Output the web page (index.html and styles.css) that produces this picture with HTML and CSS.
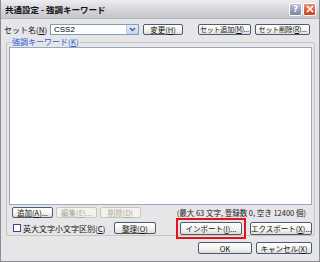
FILE: index.html
```html
<!DOCTYPE html>
<html lang="ja">
<head>
  <meta charset="UTF-8">
  <title>共通設定 - 強調キーワード</title>
  <link rel="stylesheet" href="styles.css">
</head>
<body>
<div class="window">
  <div class="titlebar">
    <span class="title">共通設定 - 強調キーワード</span>
    <span class="tbtn help">?</span>
    <span class="tbtn close">
      <svg width="8" height="8" viewBox="0 0 8 8"><path d="M1 1L7 7M7 1L1 7" stroke="#fff" stroke-width="1.6"/></svg>
    </span>
  </div>

  <div class="body">
    <div class="row top">
      <span class="label">セット名(<u>N</u>)</span>
      <div class="combo">
        <span class="combo-text">CSS2</span>
        <span class="combo-arrow">
          <svg width="7" height="5" viewBox="0 0 7 5"><path d="M1 1L3.5 3.5L6 1" stroke="#4d6185" stroke-width="1.4" fill="none"/></svg>
        </span>
      </div>
      <button class="btn w-change">変更(<u>H</u>)</button>
      <button class="btn w-add tight">セット追加(<u>M</u>)...</button>
      <button class="btn w-del tight">セット削除(<u>R</u>)...</button>
    </div>

    <div class="group">
      <span class="legend">強調キーワード(<u>K</u>)</span>
      <div class="listbox"></div>

      <div class="row edit">
        <button class="btn w-small">追加(<u>A</u>)...</button>
        <button class="btn w-small" disabled>編集(<u>E</u>)...</button>
        <button class="btn w-small" disabled>削除(<u>D</u>)</button>
        <span class="status">(最大 63 文字, 登録数 0, 空き 12400 個)</span>
      </div>

      <div class="row opts">
        <label class="check"><span class="box"></span>英大文字小文字区別(<u>C</u>)</label>
        <button class="btn w-sort">整理(<u>O</u>)</button>
        <span class="highlight">
          <button class="btn w-io">インポート(<u>I</u>)...</button>
        </span>
        <button class="btn w-io">エクスポート(<u>X</u>)...</button>
      </div>
    </div>

    <div class="row bottom">
      <button class="btn w-ok">OK</button>
      <button class="btn w-cancel">キャンセル(<u>X</u>)</button>
    </div>
  </div>
</div>
</body>
</html>
```

FILE: styles.css
```css
body {
  margin: 0;
  font-family: "Noto Sans CJK JP", "DejaVu Sans", sans-serif;
  font-size: 8px;
  background: #9a9aa4;
}

u {
  text-decoration: underline;
}

.window {
  width: 320px;
  height: 262px;
  box-sizing: border-box;
  border: 1px solid #8c8c98;
  border-top: none;
  background: #e6e5e8;
  display: flex;
  flex-direction: column;
}

.titlebar {
  height: 18px;
  display: flex;
  align-items: center;
  padding: 0 3px 0 4px;
  background: linear-gradient(#eeeef0, #d2d2d8 60%, #c6c6ce);
  border-bottom: 1px solid #b6b6be;
}

.title {
  flex: 1;
  font-weight: bold;
  color: #111;
  font-size: 8.5px;
}

.tbtn {
  width: 11px;
  height: 11px;
  margin-left: 1px;
  border: 1px solid #fff;
  border-radius: 2px;
  display: flex;
  align-items: center;
  justify-content: center;
  color: #fff;
  font: bold 9px "DejaVu Sans", sans-serif;
}

.help {
  background: linear-gradient(#b9bfd6, #7b86ab);
}

.close {
  background: linear-gradient(#f08a6e, #d0401e);
}

.body {
  flex: 1;
  padding: 4px 4px 0 3px;
  display: flex;
  flex-direction: column;
}

.row {
  display: flex;
  align-items: center;
}

.top {
  height: 12px;
}

.label {
  width: 46px;
  color: #111;
}

.combo {
  width: 89px;
  height: 11px;
  border: 1px solid #7f9db9;
  background: #fff;
  display: flex;
  align-items: center;
  box-sizing: border-box;
}

.combo-text {
  flex: 1;
  padding-left: 3px;
  font-family: "Liberation Sans", sans-serif;
  font-size: 8px;
}

.combo-arrow {
  width: 11px;
  height: 9px;
  background: linear-gradient(#e4ebfb, #c3d2f3);
  border-left: 1px solid #b9c9ea;
  display: flex;
  align-items: center;
  justify-content: center;
}

.btn {
  height: 11px;
  padding: 0;
  font: inherit;
  font-size: 7.5px;
  line-height: 9px;
  color: #111;
  border: 1px solid #4c5a7a;
  border-radius: 2px;
  background: linear-gradient(#ffffff, #f0f0ea 70%, #dcdcd4);
  box-sizing: border-box;
  white-space: nowrap;
}

.btn.tight {
  font-size: 7px;
  letter-spacing: -0.2px;
}

.btn:disabled {
  color: #aaa79c;
  border-color: #c9c7ba;
  background: #f3f2ec;
}

.w-change { width: 40px; margin-left: 4px; }
.w-add { width: 53px; margin-left: 15px; }
.w-del { width: 55px; margin-left: 4px; }

.group {
  margin-top: 7px;
  margin-left: 2px;
  height: 194px;
  border: 1px solid #c7c5b8;
  border-radius: 2px;
  box-sizing: border-box;
  padding: 4px 2px 0 2px;
  position: relative;
}

.legend {
  position: absolute;
  top: -6px;
  left: 4px;
  padding: 0 1px;
  background: #e6e5e8;
  color: #2a5bd6;
  line-height: 10px;
}

.listbox {
  height: 158px;
  background: #fff;
  border: 1px solid #9aa8c0;
  box-sizing: border-box;
}

.edit {
  margin-top: 2px;
  height: 11px;
}

.w-small {
  width: 41px;
  margin-left: 3px;
}

.status {
  margin-left: auto;
  margin-right: 6px;
  font-size: 7.5px;
  color: #222;
}

.opts {
  margin-top: 3px;
  height: 14px;
}

.check {
  display: flex;
  align-items: center;
  width: 103px;
  margin-left: 4px;
  color: #111;
}

.box {
  width: 6px;
  height: 6px;
  border: 1px solid #2f4f80;
  background: #fff;
  margin-right: 2px;
}

.w-sort {
  width: 43px;
  height: 12px;
}

.w-io {
  width: 62px;
  height: 13px;
  margin-left: 4px;
}

.highlight {
  display: flex;
  margin: -3px 0 -3px 20px;
  padding: 2px 2px;
  border: 2px solid #e8101a;
}

.highlight .w-io {
  margin-left: 0;
}

.bottom {
  margin-top: 6px;
  justify-content: flex-end;
  padding-right: 3px;
}

.w-ok { width: 54px; height: 12px; }
.w-cancel { width: 56px; height: 12px; margin-left: 4px; }
```
